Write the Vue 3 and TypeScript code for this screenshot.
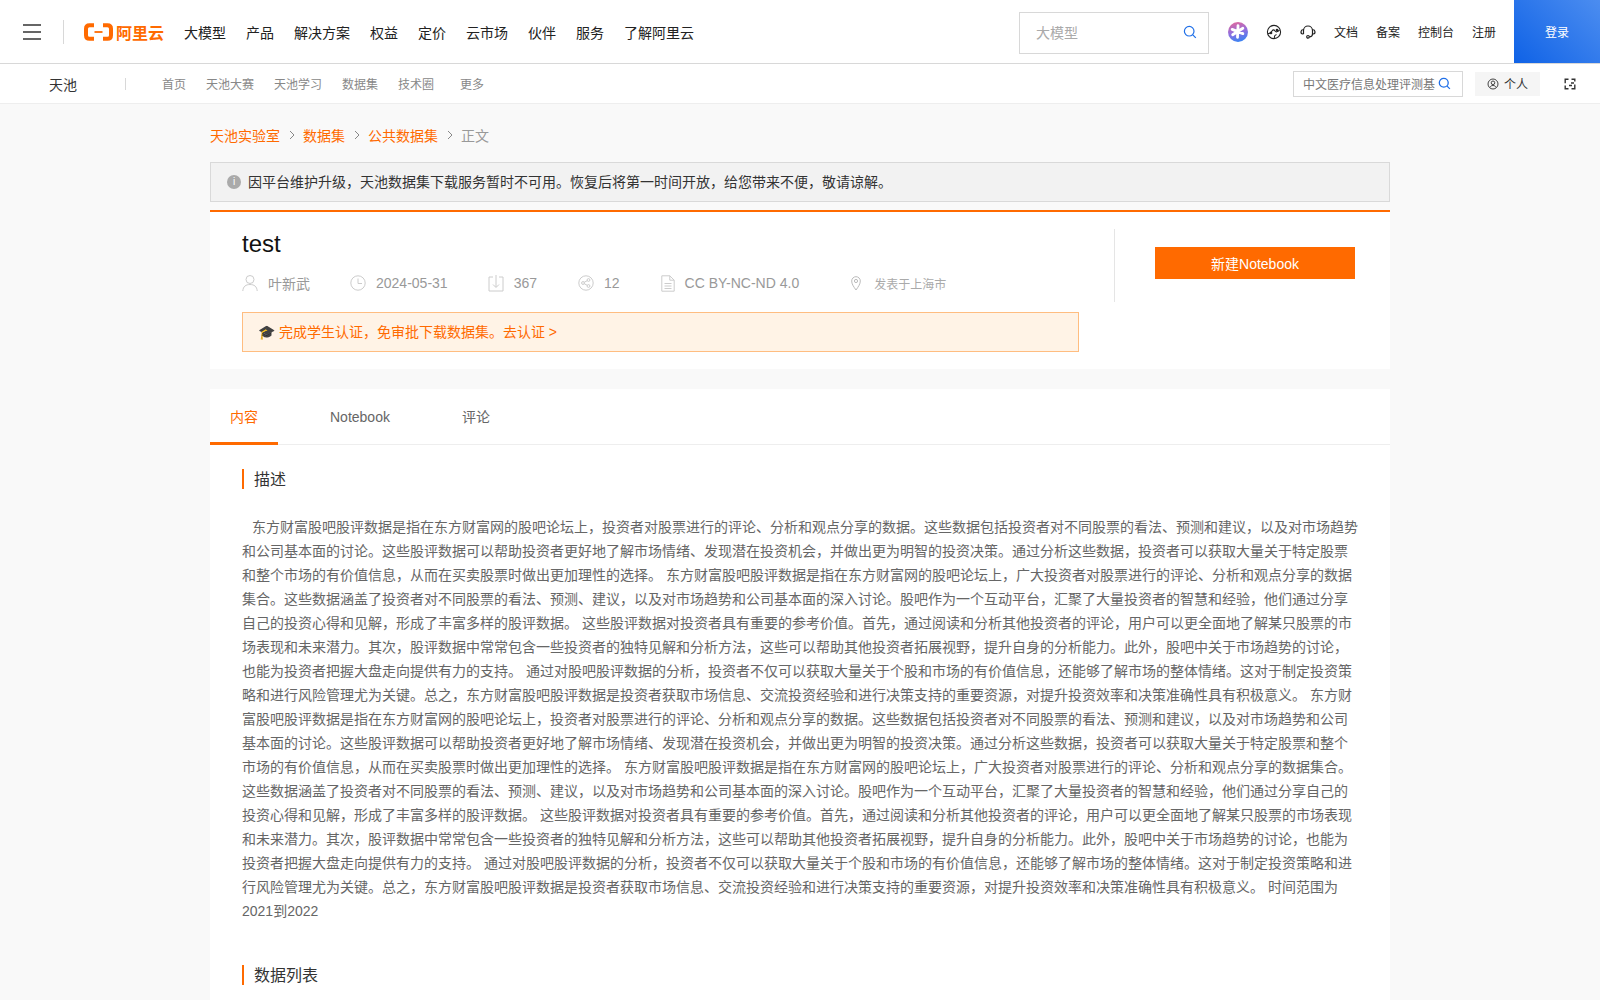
<script setup lang="ts">
const navItems = ['大模型', '产品', '解决方案', '权益', '定价', '云市场', '伙伴', '服务', '了解阿里云']
const topLinks = ['文档', '备案', '控制台', '注册']
const subItems = ['首页', '天池大赛', '天池学习', '数据集', '技术圈']

const block =
  '东方财富股吧股评数据是指在东方财富网的股吧论坛上，投资者对股票进行的评论、分析和观点分享的数据。这些数据包括投资者对不同股票的看法、预测和建议，以及对市场趋势和公司基本面的讨论。这些股评数据可以帮助投资者更好地了解市场情绪、发现潜在投资机会，并做出更为明智的投资决策。通过分析这些数据，投资者可以获取大量关于特定股票和整个市场的有价值信息，从而在买卖股票时做出更加理性的选择。 东方财富股吧股评数据是指在东方财富网的股吧论坛上，广大投资者对股票进行的评论、分析和观点分享的数据集合。这些数据涵盖了投资者对不同股票的看法、预测、建议，以及对市场趋势和公司基本面的深入讨论。股吧作为一个互动平台，汇聚了大量投资者的智慧和经验，他们通过分享自己的投资心得和见解，形成了丰富多样的股评数据。 这些股评数据对投资者具有重要的参考价值。首先，通过阅读和分析其他投资者的评论，用户可以更全面地了解某只股票的市场表现和未来潜力。其次，股评数据中常常包含一些投资者的独特见解和分析方法，这些可以帮助其他投资者拓展视野，提升自身的分析能力。此外，股吧中关于市场趋势的讨论，也能为投资者把握大盘走向提供有力的支持。 通过对股吧股评数据的分析，投资者不仅可以获取大量关于个股和市场的有价值信息，还能够了解市场的整体情绪。这对于制定投资策略和进行风险管理尤为关键。总之，东方财富股吧股评数据是投资者获取市场信息、交流投资经验和进行决策支持的重要资源，对提升投资效率和决策准确性具有积极意义。 '
const description = block + block + '时间范围为 '
</script>

<template>
  <div class="page">
    <header class="topbar">
      <div class="burger"><i /><i /><i /></div>
      <span class="top-divider" />
      <div class="logo">
        <svg width="29" height="18" viewBox="0 0 29 18" fill="none">
          <path d="M10 2.200H5.500Q2 2.200 2 5.700v6.600q0 3.500 3.500 3.500H10" stroke="#ff6a00" stroke-width="4" />
          <path d="M19 2.200h4.500Q27 2.200 27 5.700v6.600q0 3.500-3.500 3.500H19" stroke="#ff6a00" stroke-width="4" />
          <path d="M10.500 9h8" stroke="#ff6a00" stroke-width="1.800" />
        </svg>
        <span class="logo-text">阿里云</span>
      </div>
      <nav class="main-nav">
        <a v-for="item in navItems" :key="item">{{ item }}</a>
      </nav>
      <div class="top-right">
        <div class="top-search">
          <span>大模型</span>
          <svg width="14" height="14" viewBox="0 0 14 14" fill="none" stroke="#1f6fe8" stroke-width="1.200">
            <circle cx="6.200" cy="6.200" r="4.800" />
            <path d="M9.800 9.800l3 3" />
          </svg>
        </div>
        <span class="spark">
          <svg width="15" height="15" viewBox="0 0 14 14" stroke="#fff" stroke-width="2.600" stroke-linecap="round">
            <path d="M7.500 1.500L7 12.500M2 5l10 4M12 4L2.500 10" />
          </svg>
        </span>
        <svg width="16" height="16" viewBox="0 0 16 16" fill="none" stroke="#222" stroke-width="1.100">
          <circle cx="8" cy="8" r="6.600" />
          <path d="M2 9.500c2 .5 3-1 4-2.500s2-1.500 3 0 2.500 1 4.500-1M8.500 14c-.5-2 .5-3 2-3.500" />
          <circle cx="5" cy="9" r=".8" fill="#222" />
          <circle cx="11" cy="6" r=".8" fill="#222" />
        </svg>
        <svg width="16" height="16" viewBox="0 0 16 16" fill="none" stroke="#222" stroke-width="1.200">
          <path d="M3.500 10V6.500a4.500 4.500 0 0 1 9 0V10" />
          <path d="M3.500 5.800A2 2 0 0 0 2.800 10h.7M12.500 5.800a2 2 0 0 1 .7 4.200h-.7" />
          <circle cx="8" cy="12.800" r="1.300" />
          <path d="M12.500 10c0 2-2 2.800-3.200 2.800" />
        </svg>
        <a v-for="link in topLinks" :key="link" class="top-link">{{ link }}</a>
        <button class="login">登录</button>
      </div>
    </header>

    <div class="subnav">
      <span class="brand">天池</span>
      <span class="sub-divider" />
      <nav class="sub-items">
        <a v-for="item in subItems" :key="item">{{ item }}</a>
        <a class="more">更多</a>
      </nav>
      <div class="sub-right">
        <div class="sub-search">
          <span>中文医疗信息处理评测基</span>
          <svg width="13" height="13" viewBox="0 0 14 14" fill="none" stroke="#1f6fe8" stroke-width="1.400">
            <circle cx="6.200" cy="6.200" r="4.800" />
            <path d="M9.800 9.800l3 3" />
          </svg>
        </div>
        <div class="personal">
          <svg width="12" height="12" viewBox="0 0 12 12" fill="none" stroke="#444" stroke-width="1">
            <circle cx="6" cy="6" r="5" />
            <circle cx="6" cy="4.800" r="1.800" />
            <path d="M2.800 9.500c.8-1.500 1.800-2 3.200-2s2.400.5 3.200 2" />
          </svg>
          <span>个人</span>
        </div>
        <svg class="swap" width="12" height="12" viewBox="0 0 12 12" fill="none" stroke="#333" stroke-width="1.400">
          <path d="M4.500 1.200H1.200v4M1.200 7.500v3.300h3.300M7.500 1.200h3.300v2.300M10.800 6.500v4.300H7.500" />
          <path d="M7 5h3M5 7.500h3" stroke-width="1.600" />
        </svg>
      </div>
    </div>

    <main class="container">
      <div class="crumbs">
        <a>天池实验室</a>
        <svg class="chev" width="6" height="10" viewBox="0 0 6 10" fill="none" stroke="#888"><path d="M1 1l4 4-4 4" /></svg>
        <a>数据集</a>
        <svg class="chev" width="6" height="10" viewBox="0 0 6 10" fill="none" stroke="#888"><path d="M1 1l4 4-4 4" /></svg>
        <a>公共数据集</a>
        <svg class="chev" width="6" height="10" viewBox="0 0 6 10" fill="none" stroke="#888"><path d="M1 1l4 4-4 4" /></svg>
        <span>正文</span>
      </div>

      <div class="alert">
        <span class="info">i</span>
        <span>因平台维护升级，天池数据集下载服务暂时不可用。恢复后将第一时间开放，给您带来不便，敬请谅解。</span>
      </div>

      <section class="head-card">
        <div class="head-left">
          <h1>test</h1>
          <div class="meta">
            <div class="meta-item">
              <svg width="16" height="18" viewBox="0 0 16 18" fill="none" stroke="#ccc">
                <circle cx="8" cy="5.500" r="4" />
                <path d="M.8 17c.3-4.500 3-6.500 7.200-6.500s6.900 2 7.200 6.500" />
              </svg>
              <span>叶新武</span>
            </div>
            <div class="meta-item">
              <svg width="16" height="16" viewBox="0 0 16 16" fill="none" stroke="#ccc">
                <circle cx="8" cy="8" r="7.200" />
                <path d="M8 3.500V8.500h4" />
              </svg>
              <span>2024-05-31</span>
            </div>
            <div class="meta-item">
              <svg width="16" height="18" viewBox="0 0 16 18" fill="none" stroke="#ccc">
                <path d="M5 3H1v14h14V3h-4M8 1v12M5 10.500l3 3 3-3" />
              </svg>
              <span>367</span>
            </div>
            <div class="meta-item nudge">
              <svg width="16" height="16" viewBox="0 0 16 16" fill="none" stroke="#ccc">
                <circle cx="8" cy="8" r="7.200" />
                <circle cx="5" cy="8" r="1.400" />
                <circle cx="10.500" cy="5" r="1.400" />
                <circle cx="10.500" cy="11" r="1.400" />
                <path d="M6.200 7.300l3-1.600M6.200 8.700l3 1.600" />
              </svg>
              <span>12</span>
            </div>
            <div class="meta-item nudge">
              <svg width="14" height="17" viewBox="0 0 14 17" fill="none" stroke="#ccc">
                <path d="M.8.800h8l4.400 4.400v11H.8zM8.800.800v4.400h4.400M3.500 8.500h7M3.500 11h7M3.500 13.500h7" />
              </svg>
              <span>CC BY-NC-ND 4.0</span>
            </div>
            <div class="meta-item place">
              <svg width="10" height="15" viewBox="0 0 10 15" fill="none" stroke="#bbb">
                <path d="M5 14C2.500 10.500.7 8 .7 5a4.300 4.300 0 0 1 8.600 0C9.300 8 7.500 10.500 5 14z" />
                <circle cx="5" cy="5" r="1.600" />
              </svg>
              <span>发表于上海市</span>
            </div>
          </div>
          <div class="cert">🎓 <a>完成学生认证，免审批下载数据集。去认证 &gt;</a></div>
        </div>
        <span class="head-divider" />
        <div class="head-right">
          <button class="new-nb">新建Notebook</button>
        </div>
      </section>

      <section class="body-card">
        <div class="tabs">
          <a class="tab active">内容</a>
          <a class="tab">Notebook</a>
          <a class="tab">评论</a>
        </div>
        <div class="content">
          <h2>描述</h2>
          <p class="desc">{{ description }}<span class="nowrap">2021到2022</span></p>
          <h2 class="second">数据列表</h2>
        </div>
      </section>
    </main>
  </div>
</template>

<style>
html,
body {
  margin: 0;
  background: #f9f9f9;
}
</style>

<style scoped>
.page {
  height: 1000px;
  overflow: hidden;
  background: #f9f9f9;
  font-family: "Liberation Sans", "Noto Sans CJK SC", sans-serif;
  font-size: 14px;
  color: #333;
}

a {
  cursor: pointer;
}

.topbar {
  display: flex;
  align-items: center;
  height: 63px;
  padding-left: 23px;
  background: #fff;
  border-bottom: 1px solid #d8d8d8;
}

.burger {
  display: flex;
  flex-direction: column;
  justify-content: space-between;
  width: 18px;
  height: 16px;
}

.burger i {
  display: block;
  height: 2px;
  background: #666;
}

.top-divider {
  width: 1px;
  height: 24px;
  margin-left: 22px;
  background: #d8d8d8;
}

.logo {
  display: flex;
  align-items: center;
  gap: 3px;
  width: 100px;
  margin-left: 20px;
}

.logo-text {
  font-size: 16px;
  font-weight: 700;
  color: #ff6a00;
}

.main-nav {
  display: flex;
  gap: 20px;
  color: #222;
}

.top-right {
  display: flex;
  align-items: center;
  gap: 18px;
  margin-left: auto;
  height: 63px;
}

.top-search {
  box-sizing: border-box;
  display: flex;
  align-items: center;
  justify-content: space-between;
  width: 190px;
  height: 42px;
  margin-top: 2px;
  padding: 0 11px 2px 16px;
  border: 1px solid #d8d8d8;
  color: #aaa;
}

.spark {
  display: flex;
  align-items: center;
  justify-content: center;
  width: 20px;
  height: 20px;
  margin-left: 1px;
  border-radius: 50%;
  background: linear-gradient(165deg, #e2689c 5%, #8f6fe0 50%, #2f86f5 95%);
}

.top-link {
  font-size: 12px;
  color: #222;
}

.login {
  width: 86px;
  height: 63px;
  border: 0;
  padding: 0;
  background: linear-gradient(45deg, #0f62e6, #4c8df0);
  color: #fff;
  font: inherit;
  font-size: 12px;
}

.subnav {
  display: flex;
  align-items: center;
  height: 39px;
  padding-left: 49px;
  background: #fff;
  border-bottom: 1px solid #eee;
}

.brand {
  color: #333;
  width: 76px;
}

.sub-divider {
  width: 1px;
  height: 12px;
  background: #d8d8d8;
}

.sub-items {
  display: flex;
  gap: 20px;
  margin-left: 36px;
  font-size: 12px;
  color: #888;
}

.more {
  margin-left: 6px;
}

.sub-right {
  display: flex;
  align-items: center;
  margin-left: auto;
  padding-right: 24px;
}

.sub-search {
  box-sizing: border-box;
  display: flex;
  align-items: center;
  gap: 3px;
  width: 170px;
  height: 26px;
  padding-left: 9px;
  border: 1px solid #d8d8d8;
  font-size: 12px;
  color: #777;
  white-space: nowrap;
  overflow: hidden;
}

.personal {
  display: flex;
  align-items: center;
  gap: 5px;
  width: 65px;
  height: 24px;
  box-sizing: border-box;
  margin-left: 12px;
  padding-left: 12px;
  background: #f5f5f5;
  font-size: 12px;
  color: #333;
}

.swap {
  margin-left: 24px;
}

.container {
  width: 1180px;
  margin: 0 auto;
}

.crumbs {
  display: flex;
  align-items: center;
  gap: 7.5px;
  height: 32px;
  padding-top: 15px;
  padding-bottom: 11px;
  color: #ff6a00;
}

.crumbs span {
  color: #999;
}

.chev {
  margin: 0 1px;
}

.alert {
  box-sizing: border-box;
  display: flex;
  align-items: center;
  gap: 7px;
  height: 40px;
  padding: 0 0 2px 16px;
  background: #f2f2f2;
  border: 1px solid #d9d9d9;
  color: #333;
}

.info {
  width: 14px;
  height: 14px;
  margin-top: 2px;
  border-radius: 50%;
  background: #aaa;
  color: #fff;
  font-size: 10px;
  line-height: 14px;
  text-align: center;
}

.head-card {
  display: flex;
  margin-top: 8px;
  border-top: 2px solid #ff6a00;
  background: #fff;
}

.head-left {
  width: 837px;
  margin-left: 32px;
  padding: 15px 0 17px;
}

h1 {
  margin: 0;
  font-size: 24px;
  font-weight: 400;
  line-height: 34px;
  color: #111;
}

.meta {
  display: flex;
  align-items: center;
  gap: 40px;
  height: 24px;
  margin-top: 10px;
  color: #999;
}

.meta-item {
  display: flex;
  align-items: center;
  gap: 10px;
}

.nudge {
  margin-left: 1px;
}

.place {
  gap: 13px;
  margin-left: 12px;
  font-size: 12px;
  color: #aaa;
}

.cert {
  box-sizing: border-box;
  height: 40px;
  margin-top: 17px;
  padding-left: 15px;
  border: 1px solid #ffbd80;
  background: #fff3e6;
  line-height: 38px;
  color: #ff6a00;
}

.head-divider {
  width: 1px;
  height: 73px;
  margin: 17px 0 0 35px;
  background: #e5e5e5;
}

.head-right {
  padding: 35px 0 0 40px;
}

.new-nb {
  display: block;
  width: 200px;
  height: 32px;
  border: 0;
  background: #ff6a00;
  color: #fff;
  font: inherit;
}

.body-card {
  margin-top: 20px;
  background: #fff;
}

.tabs {
  display: flex;
  gap: 32px;
  height: 55px;
  border-bottom: 1px solid #eee;
}

.tab {
  height: 56px;
  box-sizing: border-box;
  padding: 0 20px;
  line-height: 56px;
  color: #666;
}

.tab.active {
  border-bottom: 3px solid #ff6a00;
  color: #ff6a00;
}

.content {
  padding: 24px 32px 40px;
}

h2 {
  height: 20px;
  margin: 0;
  padding-left: 10px;
  border-left: 2px solid #ff6a00;
  font-size: 16px;
  font-weight: 400;
  line-height: 22px;
  color: #333;
}

.second {
  margin-top: 42px;
}

.desc {
  margin: 26px 0 0;
  font-size: 14px;
  line-height: 24px;
  text-indent: 10px;
  color: #666;
}

.nowrap {
  white-space: nowrap;
}
</style>
